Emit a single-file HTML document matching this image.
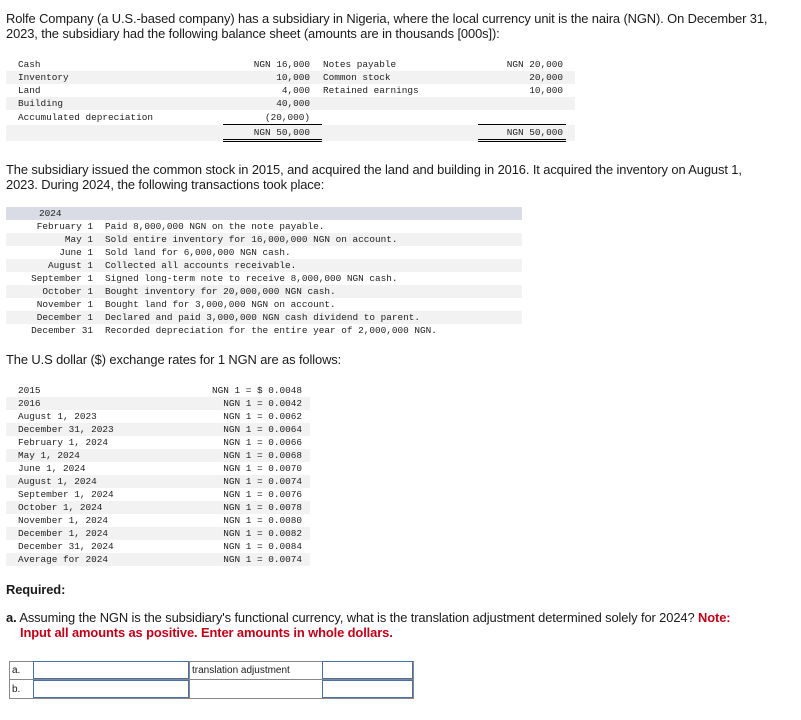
<!DOCTYPE html>
<html><head><meta charset="utf-8"><style>
body{margin:0;background:#fff;font-family:"Liberation Sans",Arial,sans-serif;color:#1a1a1a;width:801px;height:720px;overflow:hidden;position:relative}
.p{position:absolute;left:6px;font-size:12.9px;line-height:15px;letter-spacing:-0.1px}
.m{font-family:"Liberation Mono",monospace;font-size:9.4px;color:#222}
table{border-collapse:collapse}
td{padding:0;height:13px;line-height:13px;white-space:pre}
.sh td{background:#f2f2f2}
.r{text-align:right}
</style></head><body>
<div class="p" style="top:11px;width:770px">Rolfe Company (a U.S.-based company) has a subsidiary in Nigeria, where the local currency unit is the naira (NGN). On December 31, 2023, the subsidiary had the following balance sheet (amounts are in thousands [000s]):</div>

<table class="m" style="position:absolute;left:6px;top:58px;width:569px">
<tr><td style="width:12px"></td><td style="width:205px">Cash</td><td class="r" style="width:87px;padding-right:12px">NGN 16,000</td><td style="width:155px;padding-left:1px">Notes payable</td><td class="r" style="width:85px;padding-right:3px">NGN 20,000</td><td></td></tr>
<tr class="sh"><td></td><td>Inventory</td><td class="r" style="padding-right:12px">10,000</td><td style="padding-left:1px">Common stock</td><td class="r" style="padding-right:3px">20,000</td><td></td></tr>
<tr><td></td><td>Land</td><td class="r" style="padding-right:12px">4,000</td><td style="padding-left:1px">Retained earnings</td><td class="r" style="padding-right:3px">10,000</td><td></td></tr>
<tr class="sh"><td></td><td>Building</td><td class="r" style="padding-right:12px">40,000</td><td></td><td></td><td></td></tr>
<tr><td></td><td>Accumulated depreciation</td><td class="r" style="border-bottom:1px solid #000;height:14px;padding-right:12px">(20,000)</td><td></td><td style="border-bottom:1px solid #000"></td><td></td></tr>
<tr class="sh"><td></td><td style="height:16px"></td><td class="r" style="border-bottom:3px double #000;padding-right:12px">NGN 50,000</td><td></td><td class="r" style="border-bottom:3px double #000;padding-right:3px">NGN 50,000</td><td></td></tr>
</table>

<div class="p" style="top:162px;width:770px">The subsidiary issued the common stock in 2015, and acquired the land and building in 2016. It acquired the inventory on August 1, 2023. During 2024, the following transactions took place:</div>

<table class="m" style="position:absolute;left:6px;top:207px;width:516px">
<tr><td colspan="3" style="background:#d9dce4;padding-left:33px">2024</td></tr>
<tr><td class="r" style="width:87px">February 1</td><td style="width:12px"></td><td>Paid 8,000,000 NGN on the note payable.</td></tr>
<tr class="sh"><td class="r">May 1</td><td></td><td>Sold entire inventory for 16,000,000 NGN on account.</td></tr>
<tr><td class="r">June 1</td><td></td><td>Sold land for 6,000,000 NGN cash.</td></tr>
<tr class="sh"><td class="r">August 1</td><td></td><td>Collected all accounts receivable.</td></tr>
<tr><td class="r">September 1</td><td></td><td>Signed long-term note to receive 8,000,000 NGN cash.</td></tr>
<tr class="sh"><td class="r">October 1</td><td></td><td>Bought inventory for 20,000,000 NGN cash.</td></tr>
<tr><td class="r">November 1</td><td></td><td>Bought land for 3,000,000 NGN on account.</td></tr>
<tr class="sh"><td class="r">December 1</td><td></td><td>Declared and paid 3,000,000 NGN cash dividend to parent.</td></tr>
<tr><td class="r">December 31</td><td></td><td>Recorded depreciation for the entire year of 2,000,000 NGN.</td></tr>
</table>

<div class="p" style="top:352px">The U.S dollar ($) exchange rates for 1 NGN are as follows:</div>

<table class="m" style="position:absolute;left:6px;top:384px;width:304px">
<tr><td style="width:12px"></td><td style="width:150px">2015</td><td class="r">NGN 1 = $ 0.0048</td><td style="width:8px"></td></tr>
<tr class="sh"><td></td><td>2016</td><td class="r">NGN 1 = 0.0042</td><td></td></tr>
<tr><td></td><td>August 1, 2023</td><td class="r">NGN 1 = 0.0062</td><td></td></tr>
<tr class="sh"><td></td><td>December 31, 2023</td><td class="r">NGN 1 = 0.0064</td><td></td></tr>
<tr><td></td><td>February 1, 2024</td><td class="r">NGN 1 = 0.0066</td><td></td></tr>
<tr class="sh"><td></td><td>May 1, 2024</td><td class="r">NGN 1 = 0.0068</td><td></td></tr>
<tr><td></td><td>June 1, 2024</td><td class="r">NGN 1 = 0.0070</td><td></td></tr>
<tr class="sh"><td></td><td>August 1, 2024</td><td class="r">NGN 1 = 0.0074</td><td></td></tr>
<tr><td></td><td>September 1, 2024</td><td class="r">NGN 1 = 0.0076</td><td></td></tr>
<tr class="sh"><td></td><td>October 1, 2024</td><td class="r">NGN 1 = 0.0078</td><td></td></tr>
<tr><td></td><td>November 1, 2024</td><td class="r">NGN 1 = 0.0080</td><td></td></tr>
<tr class="sh"><td></td><td>December 1, 2024</td><td class="r">NGN 1 = 0.0082</td><td></td></tr>
<tr><td></td><td>December 31, 2024</td><td class="r">NGN 1 = 0.0084</td><td></td></tr>
<tr class="sh"><td></td><td>Average for 2024</td><td class="r">NGN 1 = 0.0074</td><td></td></tr>
</table>

<div class="p" style="top:582px;font-weight:bold">Required:</div>
<div class="p" style="top:610px;width:790px"><b>a.</b> Assuming the NGN is the subsidiary's functional currency, what is the translation adjustment determined solely for 2024? <b style="color:#c00018">Note:</b><br><b style="color:#c00018;margin-left:14px">Input all amounts as positive. Enter amounts in whole dollars.</b></div>

<div style="position:absolute;left:9px;top:661px;width:404px;height:37px;font-size:10px">
<div style="position:absolute;left:0;top:0;width:403px;height:36px;border:1px solid #888"></div>
<div style="position:absolute;left:0;top:18px;width:404px;border-top:1px solid #888"></div>
<div style="position:absolute;left:3px;top:4px">a.</div>
<div style="position:absolute;left:3px;top:23px">b.</div>
<div style="position:absolute;left:24px;top:0;width:154px;height:16px;border:1px solid #4a6fa5"></div>
<div style="position:absolute;left:24px;top:19px;width:154px;height:16px;border:1px solid #4a6fa5"></div>
<div style="position:absolute;left:180px;top:0;height:37px;border-left:1px solid #888"></div>
<div style="position:absolute;left:183px;top:4px">translation adjustment</div>
<div style="position:absolute;left:313px;top:0;width:89px;height:16px;border:1px solid #4a6fa5"></div>
<div style="position:absolute;left:313px;top:19px;width:89px;height:16px;border:1px solid #4a6fa5"></div>
</div>
</body></html>
